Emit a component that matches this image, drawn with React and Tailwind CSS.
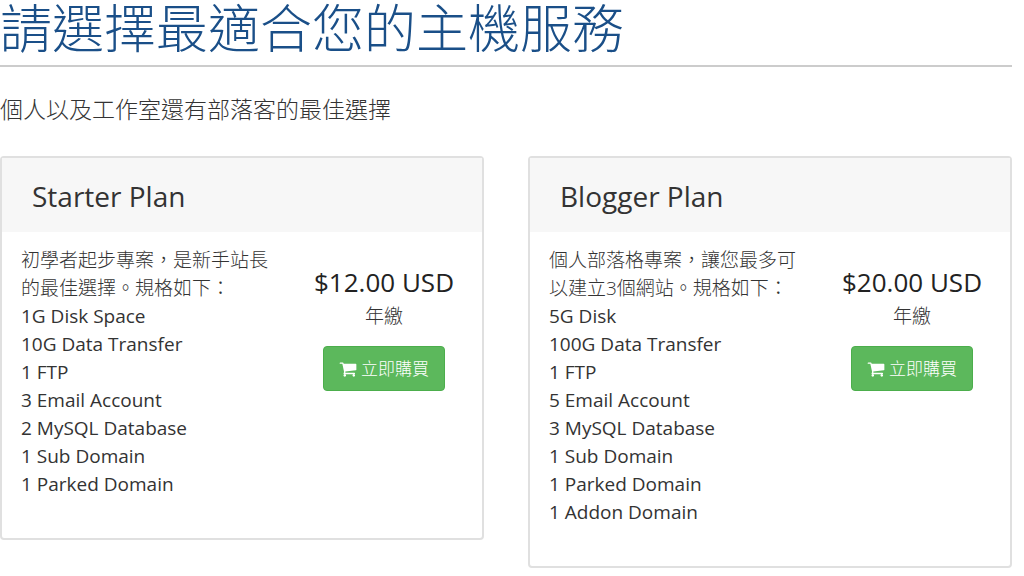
const plans = [
  {
    name: 'Starter Plan',
    intro: '初學者起步專案，是新手站長的最佳選擇。規格如下：',
    features: [
      '1G Disk Space',
      '10G Data Transfer',
      '1 FTP',
      '3 Email Account',
      '2 MySQL Database',
      '1 Sub Domain',
      '1 Parked Domain',
    ],
    price: '$12.00 USD',
  },
  {
    name: 'Blogger Plan',
    intro: '個人部落格專案，讓您最多可以建立3個網站。規格如下：',
    features: [
      '5G Disk',
      '100G Data Transfer',
      '1 FTP',
      '5 Email Account',
      '3 MySQL Database',
      '1 Sub Domain',
      '1 Parked Domain',
      '1 Addon Domain',
    ],
    price: '$20.00 USD',
  },
]

function CartIcon() {
  return (
    <svg viewBox="0 0 1792 1792" fill="currentColor" className="size-[18px]" aria-hidden="true">
      <path d="M704 1536q0 52-38 90t-90 38-90-38-38-90 38-90 90-38 90 38 38 90zm896 0q0 52-38 90t-90 38-90-38-38-90 38-90 90-38 90 38 38 90zm128-1088v512q0 24-16.5 42.5t-40.5 21.5l-1044 122q13 60 13 70 0 16-24 64h920q26 0 45 19t19 45-19 45-45 19h-1024q-26 0-45-19t-19-45q0-11 8-31.5t16-36 21.5-40 15.5-29.5l-177-823h-204q-26 0-45-19t-19-45 19-45 45-19h256q16 0 28.5 6.5t19.5 15.5 13 24.5 8 26 5.5 29.5 4.5 26h1201q26 0 45 19t19 45z" />
    </svg>
  )
}

function PlanCard({ plan }) {
  return (
    <section className="rounded border-2 border-[#e0e0e0] bg-white text-[#333333]">
      <header className="bg-[#f7f7f7] px-[30px] pt-[19px] pb-[17px]">
        <h2 className="text-[28px] leading-[38px]">{plan.name}</h2>
      </header>
      <div className="flex items-start justify-between pt-3.5 pr-7 pb-10 pl-[19px]">
        <div className="w-[250px] text-[19px] leading-7">
          <p className="font-light">{plan.intro}</p>
          <ul>
            {plan.features.map((feature) => (
              <li key={feature}>{feature}</li>
            ))}
          </ul>
        </div>
        <div className="flex flex-col items-center pt-4">
          <p className="text-[26px] leading-10 text-[#222222]">{plan.price}</p>
          <p className="text-[19px] leading-7 font-light">年繳</p>
          <button
            type="button"
            className="mt-4 flex items-center gap-1 rounded border border-[#4cae4c] bg-[#5cb85c] px-[15px] py-2 text-[17px] leading-[27px] font-light text-white"
          >
            <CartIcon />
            立即購買
          </button>
        </div>
      </div>
    </section>
  )
}

export default function App() {
  return (
    <main className="bg-white pr-3 font-['Open_Sans','Noto_Sans_CJK_TC',sans-serif]">
      <h1 className="border-b-2 border-[#cccccc] pb-2.5 text-[52px] leading-[55px] font-light text-[#1a4f88]">
        請選擇最適合您的主機服務
      </h1>
      <p className="mt-[26px] text-[23px] leading-8 font-light text-[#333333]">
        個人以及工作室還有部落客的最佳選擇
      </p>
      <div className="mt-[31px] grid grid-cols-2 items-start gap-11">
        {plans.map((plan) => (
          <PlanCard key={plan.name} plan={plan} />
        ))}
      </div>
    </main>
  )
}
